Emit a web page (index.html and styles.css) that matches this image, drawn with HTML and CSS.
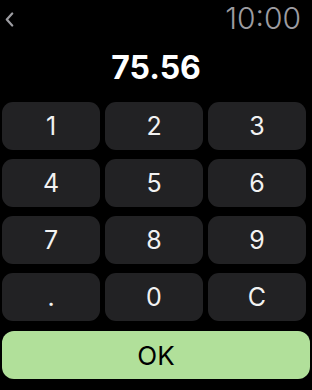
FILE: index.html
```html
<!DOCTYPE html>
<html lang="en">
<head>
    <meta charset="UTF-8">
    <meta name="viewport" content="width=device-width, initial-scale=1.0">
    <title>Keypad</title>
    <link rel="stylesheet" href="styles.css">
</head>
<body>
    <header class="top_bar">
        <svg class="back" width="9" height="15" viewBox="0 0 9 15">
            <path d="M7.2 1.5 L1.8 7.5 L7.2 13.5" fill="none" stroke="#9c9ca1" stroke-width="2.2" stroke-linecap="round" stroke-linejoin="round"/>
        </svg>
        <span class="time">10:00</span>
    </header>
    <main>
        <h1 class="value">75.56</h1>
        <div class="keypad">
            <button class="key">1</button>
            <button class="key">2</button>
            <button class="key">3</button>
            <button class="key">4</button>
            <button class="key">5</button>
            <button class="key">6</button>
            <button class="key">7</button>
            <button class="key">8</button>
            <button class="key">9</button>
            <button class="key">.</button>
            <button class="key">0</button>
            <button class="key">C</button>
        </div>
        <button class="ok">OK</button>
    </main>
</body>
</html>
```

FILE: styles.css
```css
* {
    margin: 0;
    padding: 0;
    box-sizing: border-box;
    font-family: Inter, 'Liberation Sans', sans-serif;
}
body {
    width: 312px;
    height: 390px;
    background-color: #000;
    overflow: hidden;
}
.top_bar {
    display: flex;
    justify-content: space-between;
    align-items: center;
    height: 38px;
    padding: 0 11px 3px 5px;
}
.back {
    display: block;
    margin-top: 4px;
}
.time {
    color: #9c9ca1;
    font-size: 30px;
    font-weight: 300;
}
.value {
    color: #fff;
    text-align: center;
    font-size: 32px;
    font-weight: 700;
    line-height: 60px;
    height: 64px;
}
.keypad {
    display: grid;
    grid-template-columns: repeat(3, 98px);
    grid-auto-rows: 48px;
    column-gap: 5px;
    row-gap: 9px;
    margin-left: 2px;
}
.key {
    border: none;
    border-radius: 11px;
    background-color: #222224;
    color: #f2f2f2;
    font-size: 25px;
    font-weight: 400;
}
.ok {
    display: block;
    width: 308px;
    height: 48px;
    margin: 10px 0 0 2px;
    border: none;
    border-radius: 12px;
    background-color: #b1e09a;
    color: #000;
    font-size: 26px;
    font-weight: 400;
}
```
